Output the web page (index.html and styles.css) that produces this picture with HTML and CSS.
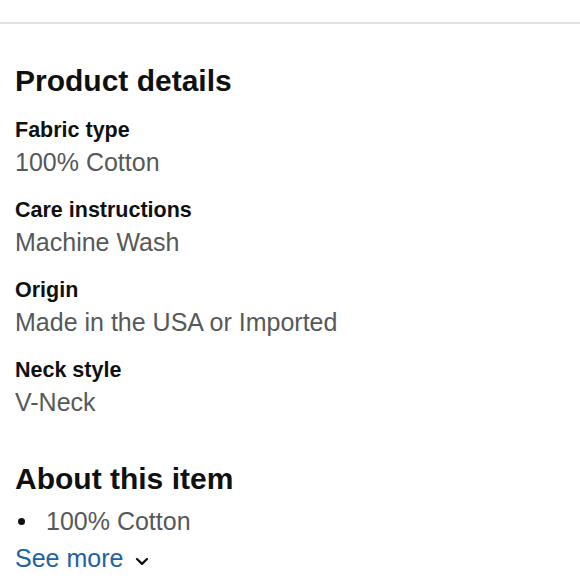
FILE: index.html
```html
<!DOCTYPE html>
<html>
<head>
<meta charset="utf-8">
<link rel="stylesheet" href="styles.css">
</head>
<body>
<div class="divider"></div>
<section class="details">
  <h2 class="heading">Product details</h2>
  <div class="attr">
    <div class="label">Fabric type</div>
    <div class="value">100% Cotton</div>
  </div>
  <div class="attr">
    <div class="label">Care instructions</div>
    <div class="value">Machine Wash</div>
  </div>
  <div class="attr">
    <div class="label">Origin</div>
    <div class="value">Made in the USA or Imported</div>
  </div>
  <div class="attr">
    <div class="label">Neck style</div>
    <div class="value">V-Neck</div>
  </div>
</section>
<section class="about">
  <h2 class="heading">About this item</h2>
  <ul class="bullets">
    <li class="bullet"><span class="dot"></span><span class="value">100% Cotton</span></li>
  </ul>
  <a class="see-more" href="#">See more <svg class="chev" width="14" height="9" viewBox="0 0 14 9"><path d="M2 2 L7 6.8 L12 2" fill="none" stroke="#0f1111" stroke-width="2.3" stroke-linecap="round" stroke-linejoin="round"/></svg></a>
</section>
</body>
</html>
```

FILE: styles.css
```css
html, body {
  margin: 0;
  padding: 0;
  background: #ffffff;
}
body {
  font-family: "Liberation Sans", Arial, sans-serif;
  color: #0f1111;
}
.divider {
  margin-top: 22px;
  height: 2px;
  background: #dfe2e2;
}
.details {
  padding: 39px 15px 0 15px;
  display: flex;
  flex-direction: column;
  gap: 16px;
}
.heading {
  margin: 0;
  font-size: 30px;
  line-height: 36px;
  font-weight: 700;
  color: #0f1111;
}
.details .heading {
  margin-bottom: -1px;
}
.attr {
  display: flex;
  flex-direction: column;
}
.label {
  font-size: 21.5px;
  line-height: 32px;
  font-weight: 700;
  color: #0f1111;
}
.value {
  font-size: 25px;
  line-height: 32px;
  color: #565959;
}
.about {
  padding: 43px 15px 0 15px;
  display: flex;
  flex-direction: column;
}
.bullets {
  list-style: none;
  margin: 8px 0 0 0;
  padding: 0;
}
.bullet {
  display: flex;
  align-items: center;
  gap: 21px;
}
.dot {
  width: 7px;
  height: 7px;
  border-radius: 50%;
  background: #0f1111;
  margin-left: 3px;
  flex: none;
}
.see-more {
  margin-top: 5px;
  font-size: 25px;
  line-height: 32px;
  color: #2162a1;
  text-decoration: none;
  display: flex;
  align-items: center;
  gap: 12px;
}
.chev {
  margin-top: 6px;
}
```
